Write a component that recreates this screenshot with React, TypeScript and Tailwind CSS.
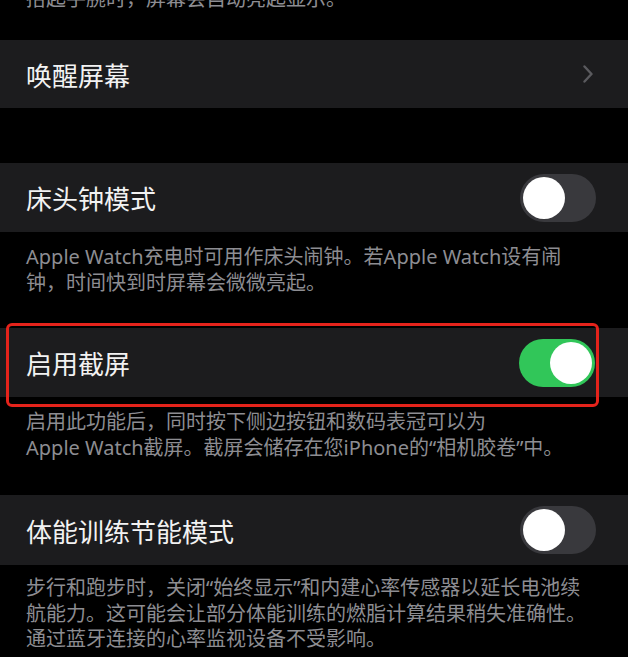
import React from "react";

function Chevron() {
  return (
    <svg width="10" height="18" viewBox="0 0 10 18" fill="none">
      <path
        d="M1.5 1.5 L8.5 9 L1.5 16.5"
        stroke="#5a5a5e"
        strokeWidth="2.4"
        strokeLinecap="round"
        strokeLinejoin="round"
      />
    </svg>
  );
}

function Toggle({ on }: { on: boolean }) {
  return on ? (
    <div className="flex h-[48px] w-[76px] shrink-0 items-center justify-end rounded-full bg-[#31c659] p-[3px]">
      <div className="h-[42px] w-[42px] rounded-full bg-white" />
    </div>
  ) : (
    <div className="flex h-[48px] w-[76px] shrink-0 items-center justify-start rounded-full bg-[#39393d] p-[3px]">
      <div className="h-[42px] w-[42px] rounded-full bg-white" />
    </div>
  );
}

function Row({
  title,
  children,
  className,
}: {
  title: string;
  children: React.ReactNode;
  className: string;
}) {
  return (
    <div
      className={
        "flex items-center justify-between bg-[#1c1c1e] pl-[26px] " + className
      }
    >
      <span className="pt-[3px] text-[26px] leading-[30px] text-[#f2f2f2]">
        {title}
      </span>
      {children}
    </div>
  );
}

function Note({ lines, className }: { lines: string[]; className: string }) {
  return (
    <div
      className={
        "whitespace-nowrap px-[26px] text-[20px] text-[#8d8d92] " + className
      }
    >
      {lines.map((l) => (
        <div key={l}>{l}</div>
      ))}
    </div>
  );
}

export default function App() {
  return (
    <div className="h-[657px] w-[628px] overflow-hidden bg-black font-['Noto_Sans','Noto_Sans_CJK_SC',sans-serif]">
      <Note
        className="-mt-[14px] leading-[26px]"
        lines={["抬起手腕时，屏幕会自动亮起显示。"]}
      />

      <Row title="唤醒屏幕" className="mt-[28px] h-[68px] pr-[35px]">
        <Chevron />
      </Row>

      <Row title="床头钟模式" className="mt-[55px] h-[69px] pr-[32px]">
        <Toggle on={false} />
      </Row>
      <Note
        className="pt-[12px] leading-[26px]"
        lines={[
          "Apple Watch充电时可用作床头闹钟。若Apple Watch设有闹",
          "钟，时间快到时屏幕会微微亮起。",
        ]}
      />

      <div className="relative mt-[32px]">
        <Row title="启用截屏" className="h-[69px] pr-[33px]">
          <Toggle on={true} />
        </Row>
        <div className="pointer-events-none absolute -top-[5px] left-[6px] h-[84px] w-[593px] rounded-[6px] border-[3px] border-[#e5231b]" />
      </div>
      <Note
        className="pt-[12px] leading-[26px]"
        lines={[
          "启用此功能后，同时按下侧边按钮和数码表冠可以为",
          "Apple Watch截屏。截屏会储存在您iPhone的“相机胶卷”中。",
        ]}
      />

      <Row title="体能训练节能模式" className="mt-[34px] h-[70px] pr-[32px]">
        <Toggle on={false} />
      </Row>
      <Note
        className="pt-[10px] leading-[25.5px]"
        lines={[
          "步行和跑步时，关闭“始终显示”和内建心率传感器以延长电池续",
          "航能力。这可能会让部分体能训练的燃脂计算结果稍失准确性。",
          "通过蓝牙连接的心率监视设备不受影响。",
        ]}
      />
    </div>
  );
}
